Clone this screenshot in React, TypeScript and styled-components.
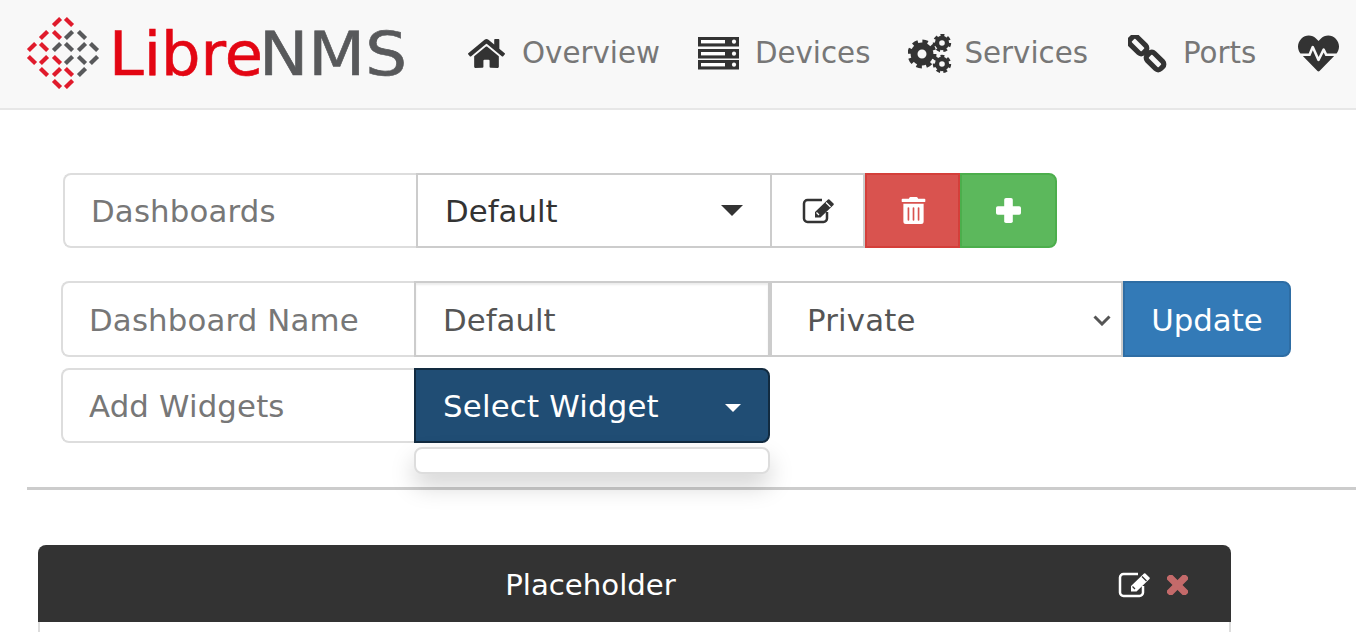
import React from "react";
import styled, { createGlobalStyle } from "styled-components";
import { FaHome, FaHeartbeat, FaTrashAlt } from "react-icons/fa";

const Global = createGlobalStyle`
  html, body { margin: 0; padding: 0; background: #fff; overflow: hidden; height: 632px; }
  body { font-family: "DejaVu Sans", "Liberation Sans", sans-serif; color: #333; }
  * { box-sizing: border-box; }
`;

const Navbar = styled.nav`
  display: flex; align-items: center; height: 110px; width: 1356px; overflow: hidden;
  background: #f8f8f8; border-bottom: 2px solid #e7e7e7; padding-left: 26px;
`;
const Logo = styled.svg`flex: none; display: block; width: 382px; height: 76px; margin-top: -6px;`;
const NavList = styled.div`display: flex; align-items: center; margin-left: 60px; gap: 38px; flex: none;`;
const NavItem = styled.a`
  display: flex; align-items: center; gap: 16px; color: #777; font-size: 29.3px; white-space: nowrap; margin-top: -3px;
`;
const NavIcon = styled.span<{ $w: number; $inset?: number }>`
  width: ${p => p.$w}px; padding-left: ${p => p.$inset ?? 0}px; flex: none; display: flex; align-items: center; color: #333; margin-top: 2px;
  svg { flex: none; }
`;
const Main = styled.main`padding: 63px 0 0 27px;`;
const Group = styled.div<{ $left: number; $top?: number; $h?: number; $nudge?: number }>`
  display: flex; height: ${p => p.$h ?? 75}px; margin-left: ${p => p.$left}px; margin-top: ${p => p.$top ?? 0}px; position: relative;
  --nudge: ${p => p.$nudge ?? 0}px;
`;
const Addon = styled.div`
  width: 353px; flex: none; display: flex; align-items: center; padding: var(--nudge) 0 0 26px;
  border: 2px solid #ddd; border-right: 0; border-radius: 8px 0 0 8px;
  color: #777; font-size: 30.8px; letter-spacing: .15px;
`;
const Cell = styled.div<{ $w: number }>`
  width: ${p => p.$w}px; flex: none; display: flex; align-items: center; justify-content: space-between;
  padding: var(--nudge) 27px 0; border: 2px solid #ccc; font-size: 30.8px; color: #333; background: #fff;
`;
const NameInput = styled(Cell)`
  color: #555; box-shadow: inset 0 2px 2px rgba(0,0,0,.075); border-right-width: 4px;
`;
const Caret = styled.span`
  width: 0; height: 0; border-left: 11px solid transparent; border-right: 11px solid transparent;
  border-top: 11px solid #333;
`;
const IconBtn = styled.div<{ $bg: string; $bd: string; $w: number; $fg: string; $end?: boolean; $open?: boolean }>`
  width: ${p => p.$w}px; flex: none; display: flex; align-items: center; justify-content: center;
  background: ${p => p.$bg}; border: 2px solid ${p => p.$bd}; color: ${p => p.$fg};
  border-left-width: ${p => (p.$open ? 0 : 2)}px;
  border-radius: ${p => (p.$end ? "0 8px 8px 0" : "0")};
`;
const TrashGlyph = styled(FaTrashAlt)`margin-left: 2px;`;
const SelectCell = styled(Cell)`
  color: #555; padding-left: 35px; padding-right: 10px; border-left: 0; letter-spacing: .2px;
`;
const UpdateBtn = styled.div`
  flex: none; width: 168px; display: flex; align-items: center; justify-content: center; padding-top: var(--nudge);
  background: #337ab7; border: 2px solid #2e6da4; border-radius: 0 8px 8px 0; color: #fff; font-size: 30.8px;
`;
const WidgetBtn = styled.div`
  width: 356px; flex: none; display: flex; align-items: center; justify-content: space-between;
  padding: 0 27px; background: #204d74; border: 2px solid #122b40; border-radius: 0 8px 8px 0;
  color: #fff; font-size: 30.8px; letter-spacing: .2px;
`;
const SmallCaret = styled(Caret)`border-left-width: 8px; border-right-width: 8px; border-top: 8px solid #fff; margin-top: 4px;`;
const Menu = styled.div`
  position: absolute; left: 353px; top: 79px; width: 356px; height: 27px; background: #fff;
  border: 2px solid #ddd; border-radius: 8px; box-shadow: 0 12px 24px rgba(0,0,0,.175);
`;
const Rule = styled.hr`margin: 44px 0 0; height: 3px; border: 0; background: #ccc;`;
const Widget = styled.section`margin: 55px 0 0 11px; width: 1193px;`;
const WidgetHead = styled.header`
  height: 77px; background: #333; color: #fff; border-radius: 8px 8px 0 0; position: relative;
  display: flex; align-items: center; justify-content: center; font-size: 29.2px; padding: 2px 88px 0 0;
`;
const WidgetTools = styled.div`
  position: absolute; right: 43px; top: 27px; display: flex; align-items: center; gap: 17px;
`;
const WidgetBody = styled.div`height: 30px; background: #fff; border: 2px solid #ddd; border-top: 0;`;

const logoMarks: [number, number, "r" | "g", number][] = [
  [57,19,"r",-1],[69,19,"r",1],
  [44,32,"r",-1],[57,32,"r",1],[69,32,"g",-1],[82,32,"g",1],
  [32,44,"r",-1],[44,44,"r",1],[57,44,"g",-1],[69,44,"g",1],[82,44,"g",-1],[94,44,"g",1],
  [32,57,"r",1],[44,57,"r",-1],[57,57,"r",1],[69,57,"g",-1],[82,57,"g",1],[94,57,"g",-1],
  [44,69,"r",1],[57,69,"r",-1],[69,69,"r",1],[82,69,"g",-1],
  [57,81,"r",1],[69,81,"r",-1],
];

const EditIcon = ({ color }: { color: string }) => (
  <svg width="32" height="26" viewBox="0 0 32 26" fill="none">
    <path d="M20 2H5.500A3.500 3.500 0 0 0 2 5.500V20.500A3.500 3.500 0 0 0 5.500 24H21.500A3.500 3.500 0 0 0 25 20.500V14" stroke={color} strokeWidth="2.500" />
    <path d="M13 19.500V14L26 1.500a1 1 0 0 1 1.400 0L31.500 5.500a1 1 0 0 1 0 1.400L18.500 19.500Z" fill={color} />
    <path d="M14.500 14.500L17 17M24 4.500L28.500 9" stroke={color === "#333" ? "#fff" : "#333"} strokeWidth="1.300" />
  </svg>
);
const ServerIcon = () => (
  <svg width="41" height="33" viewBox="0 0 41 33">
    {[0, 12, 23].map(y => (
      <g key={y}>
        <rect x="0" y={y} width="41" height="9.500" fill="#333" />
        <rect x="3" y={y + 3} width="24" height="3.400" fill="#fff" />
        <circle cx="36" cy={y + 4.700} r="2.100" fill="#fff" />
      </g>
    ))}
  </svg>
);
const Gear = ({ cx, cy, r, teeth, hole }: { cx: number; cy: number; r: number; teeth: number; hole: number }) => {
  const outer = 2 * Math.PI * r;
  const step = outer / teeth;
  return (
    <g fill="none" stroke="#333">
      <circle cx={cx} cy={cy} r={r} strokeWidth={r * 0.42} strokeDasharray={`${step * 0.55} ${step * 0.45}`} />
      <circle cx={cx} cy={cy} r={(r * 0.95 + hole) / 2} strokeWidth={r * 0.95 - hole} />
    </g>
  );
};
const CogsIcon = () => (
  <svg width="44" height="40" viewBox="0 0 44 40">
    <Gear cx={14} cy={20} r={12} teeth={8} hole={4.500} />
    <Gear cx={34} cy={9} r={7.600} teeth={7} hole={2.800} />
    <Gear cx={34} cy={30} r={7.600} teeth={7} hole={2.800} />
  </svg>
);
const LinkIcon = () => (
  <svg width="39" height="38" viewBox="0 0 39 38" fill="none" stroke="#333" strokeWidth="5.200">
    <rect x="0.500" y="5" width="19" height="10" rx="3.500" transform="rotate(45 10 10)" />
    <rect x="17.500" y="21" width="19" height="10" rx="3.500" transform="rotate(45 27 26)" />
  </svg>
);
const PlusIcon = () => (
  <svg width="25" height="25" viewBox="0 0 25 25" fill="#fff">
    <rect x="8.200" y="0" width="8.600" height="25" rx="1.800" />
    <rect x="0" y="8.200" width="25" height="8.600" rx="1.800" />
  </svg>
);
const TimesIcon = () => (
  <svg width="21" height="20" viewBox="0 0 21 20" fill="#c46a6a">
    <rect x="-2.500" y="6.500" width="26" height="7" rx="1.600" transform="rotate(45 10.500 10)" />
    <rect x="-2.500" y="6.500" width="26" height="7" rx="1.600" transform="rotate(-45 10.500 10)" />
  </svg>
);

export default function App() {
  return (
    <>
      <Global />
      <Navbar>
        <Logo viewBox="26 10 382 76">
          {logoMarks.map(([x, y, c, d], i) => (
            <line key={i} x1={x - 3.600} y1={y - 3.600 * d} x2={x + 3.600} y2={y + 3.600 * d}
              stroke={c === "r" ? "#e01b2c" : "#58595b"} strokeWidth="4.200" />
          ))}
          <text x="109" y="72" fontFamily="'DejaVu Sans', sans-serif" fontSize="60" fill="#e30613" stroke="#e30613" strokeWidth=".6" textLength="154" lengthAdjust="spacingAndGlyphs">Libre</text>
          <text x="259" y="72" fontFamily="'DejaVu Sans', sans-serif" fontSize="60" fill="#58595b" stroke="#58595b" strokeWidth=".6" textLength="148" lengthAdjust="spacingAndGlyphs">NMS</text>
        </Logo>
        <NavList>
          <NavItem><NavIcon $w={38}><FaHome size={37} /></NavIcon>Overview</NavItem>
          <NavItem><NavIcon $w={41}><ServerIcon /></NavIcon>Devices</NavItem>
          <NavItem><NavIcon $w={40}><CogsIcon /></NavIcon>Services</NavItem>
          <NavItem><NavIcon $w={41} $inset={2}><LinkIcon /></NavIcon>Ports</NavItem>
          <NavItem><NavIcon $w={45} $inset={4}><FaHeartbeat size={41} /></NavIcon>Health</NavItem>
        </NavList>
      </Navbar>
      <Main>
        <Group $left={36}>
          <Addon>Dashboards</Addon>
          <Cell $w={356}>Default<Caret /></Cell>
          <IconBtn $w={93} $bg="#fff" $bd="#ccc" $fg="#333" $open><EditIcon color="#333" /></IconBtn>
          <IconBtn $w={95} $bg="#d9534f" $bd="#d43f3a" $fg="#fff"><TrashGlyph size={27} /></IconBtn>
          <IconBtn $w={97} $bg="#5cb85c" $bd="#4cae4c" $fg="#fff" $end><PlusIcon /></IconBtn>
        </Group>
        <Group $left={34} $top={33} $h={76} $nudge={2}>
          <Addon>Dashboard Name</Addon>
          <NameInput $w={358}>Default</NameInput>
          <SelectCell $w={351}>Private<svg width="18" height="11" viewBox="0 0 18 11"><path d="M1.500 1.500L9 9l7.500-7.500" fill="none" stroke="#555" strokeWidth="3" /></svg></SelectCell>
          <UpdateBtn>Update</UpdateBtn>
        </Group>
        <Group $left={34} $top={11}>
          <Addon>Add Widgets</Addon>
          <WidgetBtn>Select Widget<SmallCaret /></WidgetBtn>
          <Menu />
        </Group>
        <Rule />
        <Widget>
          <WidgetHead>Placeholder
            <WidgetTools>
              <EditIcon color="#fff" />
              <TimesIcon />
            </WidgetTools>
          </WidgetHead>
          <WidgetBody />
        </Widget>
      </Main>
    </>
  );
}
